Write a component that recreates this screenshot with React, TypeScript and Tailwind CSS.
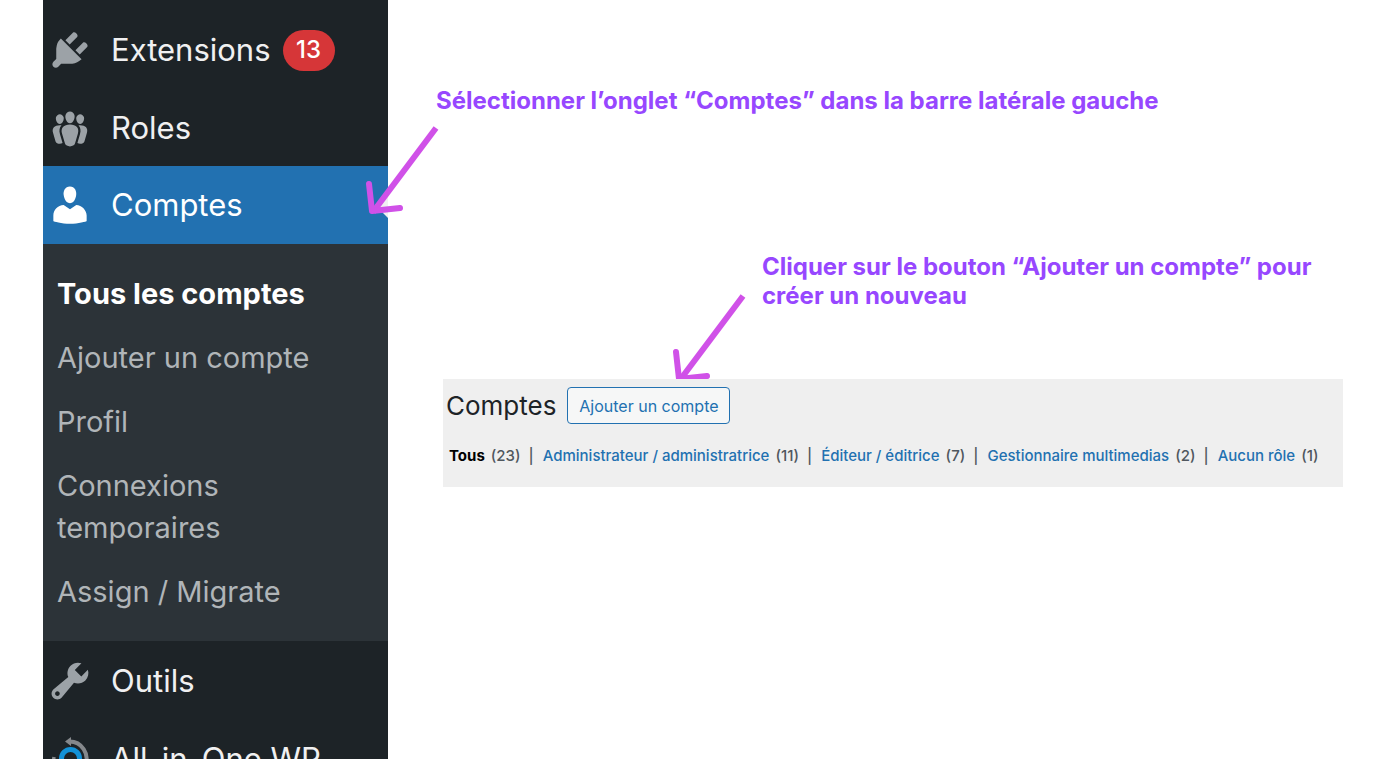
import React from "react";

interface MenuItemProps {
  label: string;
  icon: React.ReactNode;
  active?: boolean;
  count?: number;
}

const ICONS = {
  plugin:
    "M13.11 4.36L9.87 7.6 8 5.73l3.24-3.24c.35-.34 1.05-.2 1.56.32.52.51.66 1.21.31 1.55zm-8 1.77l.91-1.12 9.01 9.01-1.19.84c-.71.71-2.63 1.16-3.82 1.16H6.14L4.9 17.26c-.59.59-1.54.59-2.12 0-.59-.58-.59-1.53 0-2.12l1.24-1.24v-3.88c0-1.13.4-3.19 1.09-3.89zm7.26 3.97l3.24-3.24c.34-.35 1.04-.21 1.55.31.52.51.66 1.21.31 1.55l-3.24 3.25z",
  groups:
    "M8.03 4.46c-.29 1.28.55 3.46 1.97 3.46 1.41 0 2.25-2.18 1.96-3.46-.22-.98-1.08-1.63-1.96-1.63-.89 0-1.74.65-1.97 1.63zm-4.13.9c-.25 1.08.47 2.93 1.67 2.93s1.92-1.85 1.67-2.93c-.19-.83-.92-1.39-1.67-1.39s-1.48.56-1.67 1.39zm8.86 0c-.25 1.08.47 2.93 1.66 2.93 1.2 0 1.92-1.85 1.67-2.93-.19-.83-.92-1.39-1.67-1.39-.74 0-1.47.56-1.66 1.39zm-.59 11.43l1.25-4.3C14.2 10 12.71 8.47 10 8.47c-2.72 0-4.21 1.53-3.44 4.02l1.26 4.3C8.05 17.51 9 18 10 18c.98 0 1.94-.49 2.17-1.21zm-6.1-7.63c-.49.67-.96 1.83-.42 3.59l1.12 3.79c-.34.2-.77.31-1.2.31-.85 0-1.65-.41-1.85-1.03l-1.07-3.65c-.65-2.11.61-3.4 2.92-3.4.27 0 .54.02.79.06-.1.1-.2.22-.29.33zm8.35-.39c2.31 0 3.58 1.29 2.92 3.4l-1.07 3.65c-.2.62-1 1.03-1.85 1.03-.43 0-.86-.11-1.2-.31l1.11-3.77c.55-1.78.08-2.94-.42-3.61-.08-.11-.18-.23-.28-.33.25-.04.51-.06.79-.06z",
  user: "M10 9.25c-2.27 0-2.73-3.44-2.73-3.44C7 4.02 7.82 2 9.97 2c2.16 0 2.98 2.02 2.71 3.81 0 0-.41 3.44-2.68 3.44zm0 2.57L12.72 10c2.39 0 4.52 2.33 4.52 4.53v2.49s-3.65 1.13-7.24 1.13c-3.65 0-7.24-1.13-7.24-1.13v-2.49c0-2.25 1.94-4.48 4.47-4.48z",
  tools:
    "M16.68 9.77c-1.34 1.34-3.3 1.67-4.95.99l-5.41 6.52c-.99.99-2.59.99-3.58 0s-.99-2.59 0-3.57l6.52-5.42c-.68-1.65-.35-3.61.99-4.95 1.28-1.28 3.12-1.62 4.72-1.06l-2.89 2.89 2.82 2.82 2.86-2.87c.53 1.58.18 3.39-1.08 4.65zM3.81 16.21c.4.39 1.04.39 1.43 0 .4-.4.4-1.04 0-1.43-.39-.4-1.03-.4-1.43 0-.39.39-.39 1.03 0 1.43z",
};

const SUBMENU = [
  "Tous les comptes",
  "Ajouter un compte",
  "Profil",
  "Connexions temporaires",
  "Assign / Migrate",
];

const FILTERS = [
  { label: "Tous", count: 23 },
  { label: "Administrateur / administratrice", count: 11 },
  { label: "Éditeur / éditrice", count: 7 },
  { label: "Gestionnaire multimedias", count: 2 },
  { label: "Aucun rôle", count: 1 },
];

const Dashicon = ({ path }: { path: string }) => (
  <svg viewBox="0 0 20 20" className="size-[46px]" fill="currentColor" aria-hidden="true">
    <path d={path} />
  </svg>
);

const MigrationIcon = () => (
  <svg viewBox="0 0 46 46" className="size-[46px]" fill="none" aria-hidden="true">
    <path d="M22 5.5a17 17 0 0 1 16 24" stroke="#85888c" strokeWidth="4" />
    <path d="M24 1v9l-6-4.5z" fill="#85888c" />
    <path d="M7 21a17 17 0 0 0 7 17" stroke="#85888c" strokeWidth="3.5" />
    <circle cx="23.5" cy="22.5" r="9" stroke="#1392d8" strokeWidth="5" />
  </svg>
);

const Arrow = ({ className }: { className: string }) => (
  <svg
    viewBox="0 0 76 92"
    className={"absolute w-[76px] h-[92px] pointer-events-none " + className}
    fill="none"
    stroke="#d051e8"
    strokeWidth="6"
    aria-hidden="true"
  >
    <path d="M71 3L8 87" />
    <path d="M4 59L7 86L35 83" strokeLinecap="round" strokeLinejoin="round" />
  </svg>
);

const MenuItem = ({ label, icon, active, count }: MenuItemProps) => (
  <a
    href="#"
    className={
      active
        ? "relative flex items-center h-[78px] pl-1 bg-[#2271b1] text-white"
        : "relative flex items-center h-[78px] pt-0.5 pl-1 text-[#f0f0f1]"
    }
  >
    <span className={active ? "text-white" : "text-[#9ca2a7]"}>{icon}</span>
    <span className="ml-[18px] text-[31px] whitespace-nowrap">{label}</span>
    {count && (
      <span className="ml-3 flex items-center justify-center w-[52px] h-[41px] rounded-full bg-[#d63638] text-white text-2xl font-medium">
        {count}
      </span>
    )}
    {active && (
      <svg viewBox="0 0 13 26" className="absolute right-0 w-[13px] h-[26px]" aria-hidden="true">
        <path d="M13 0v26L0 13z" fill="#f0f0f1" />
      </svg>
    )}
  </a>
);

const Sidebar = () => (
  <nav className="w-[345px] shrink-0 pt-[10px] bg-[#1d2327]">
    <MenuItem label="Extensions" icon={<Dashicon path={ICONS.plugin} />} count={13} />
    <MenuItem label="Roles" icon={<Dashicon path={ICONS.groups} />} />
    <MenuItem label="Comptes" icon={<Dashicon path={ICONS.user} />} active />
    <ul className="flex flex-col gap-[22px] pt-[29px] pb-7 pl-[14px] pr-6 bg-[#2c3338] text-[29px] leading-[42px]">
      {SUBMENU.map((item, i) => (
        <li key={item}>
          <a href="#" className={i === 0 ? "block font-bold text-white" : "block text-[#b0b5b8]"}>
            {item}
          </a>
        </li>
      ))}
    </ul>
    <MenuItem label="Outils" icon={<Dashicon path={ICONS.tools} />} />
    <MenuItem label="All-in-One WP" icon={<MigrationIcon />} />
  </nav>
);

const AccountsPanel = () => (
  <section className="h-[108px] bg-[#efefef]">
    <div className="flex items-center gap-[11px] pt-2 pl-[3px]">
      <h1 className="text-[26px] leading-9 text-[#1d2327]">Comptes</h1>
      <button className="h-[37px] w-[163px] rounded border border-[#2271b1] bg-[#f6f7f7] text-[#2271b1] text-base whitespace-nowrap">
        Ajouter un compte
      </button>
    </div>
    <ul className="flex gap-2 mt-5 pl-[6px] text-[15px] leading-6 font-medium text-[#50575e] whitespace-nowrap">
      {FILTERS.map((filter, i) => (
        <li key={filter.label} className="flex gap-[9px]">
          {i > 0 && <span>|</span>}
          <span className="flex gap-[6px]">
            <a href="#" className={i === 0 ? "font-bold text-black" : "text-[#2271b1]"}>
              {filter.label}
            </a>
            <span>({filter.count})</span>
          </span>
        </li>
      ))}
    </ul>
  </section>
);

export default function App() {
  return (
    <div className="flex h-screen overflow-hidden bg-white pl-[43px] font-['Inter',sans-serif]">
      <Sidebar />
      <main className="relative flex-1 min-w-0 pl-[55px] pr-[57px] pt-[86px]">
        <p className="-ml-[7px] text-2xl leading-[29px] font-bold text-[#9747ff]">
          Sélectionner l’onglet “Comptes” dans la barre latérale gauche
        </p>
        <Arrow className="-left-[23px] top-[125px]" />
        <p className="mt-[137px] mb-[69px] ml-[319px] max-w-[570px] text-2xl leading-[29px] font-bold text-[#9747ff]">
          Cliquer sur le bouton “Ajouter un compte” pour créer un nouveau
        </p>
        <Arrow className="left-[284px] top-[293px]" />
        {/* the panel covers the tip of the second arrow */}
        <div className="relative">
          <AccountsPanel />
        </div>
      </main>
    </div>
  );
}
